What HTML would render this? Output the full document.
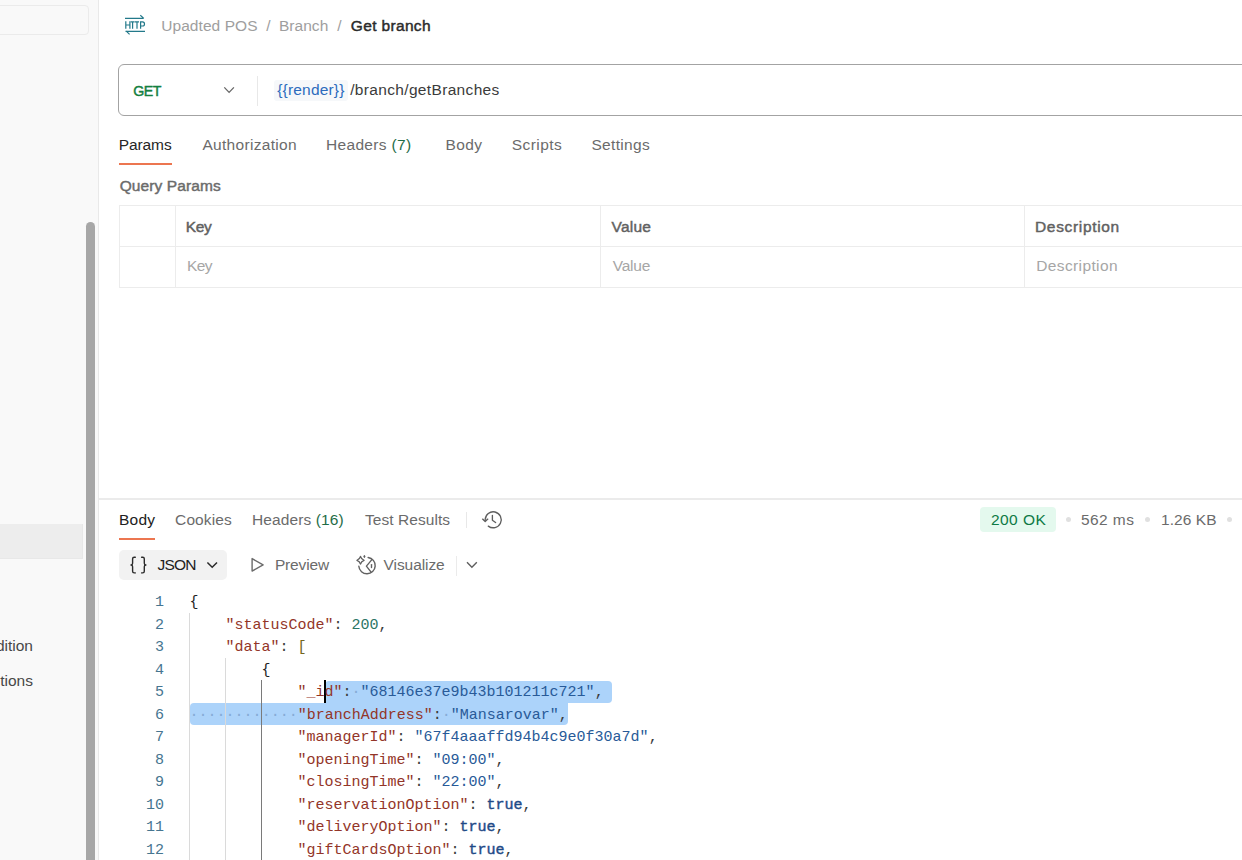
<!DOCTYPE html>
<html><head><meta charset="utf-8">
<style>
*{margin:0;padding:0;box-sizing:border-box}
html,body{width:1242px;height:860px;overflow:hidden;background:#fff;font-family:"Liberation Sans",sans-serif;color:#212121}
.a{position:absolute;white-space:nowrap}
.tx{font-size:15.5px;line-height:20px}
#side{position:absolute;left:0;top:0;width:98px;height:860px;background:#f9f9f9}
#sideb{position:absolute;left:98px;top:0;width:1px;height:860px;background:#e9e9e9}
#search{position:absolute;left:-10px;top:5px;width:99px;height:30px;border:1px solid #ebebeb;border-radius:4px;background:#f9f9f9}
#selrow{position:absolute;left:-4px;top:524px;width:87px;height:34.5px;background:#ededed;border-right:1px solid #e8e8e8;border-bottom:1px solid #e8e8e8}
.sidetxt{font-size:15.5px;line-height:20px;color:#474747;text-align:right;width:200px}
#sbar{position:absolute;left:86px;top:222px;width:9px;height:660px;background:#a7a7a7;border-radius:4.5px}
.ln{position:absolute;left:100px;width:64px;text-align:right;font-family:"Liberation Mono",monospace;font-size:15px;line-height:22px;color:#467590;white-space:pre}
.cl{position:absolute;left:189.5px;font-family:"Liberation Mono",monospace;font-size:15px;line-height:22px;color:#3a3a3a;white-space:pre}
.k{color:#933528}.s{color:#285a98}.n{color:#2b7565}.t{color:#1f4a87;-webkit-text-stroke:0.4px #1f4a87}.bk{color:#74671e}.p{color:#222}
.dot{color:#86acd6}
.g{position:absolute;width:1px;background:#dadada}
</style></head><body>
<div id="side">
  <div id="search"></div>
  <div id="selrow"></div>
  <div class="a sidetxt" style="left:-167px;top:636px">dition</div>
  <div class="a sidetxt" style="left:-167px;top:671px">tions</div>
  <div id="sbar"></div>
</div>
<div id="sideb"></div>

<!-- HTTP icon -->
<svg class="a" style="left:118px;top:10px" width="36" height="30" viewBox="118 10 36 30">
  <g stroke="#23798a" stroke-width="1.2" fill="none" stroke-linecap="butt">
    <path d="M125 18.4H143.6M140.3 15.3L143.8 18.4"/>
    <path d="M125.5 31.3H145M126 30.9L129.6 34.4"/>
    <path d="M125.8 21.2V28.8M129.9 21.2V28.8M125.8 25H129.9"/>
    <path d="M130.6 21.8H134.6M132.6 21.8V28.8"/>
    <path d="M134.9 21.8H139M137 21.8V28.8"/>
    <path d="M140.6 28.8V21.8H142.5Q144.5 21.8 144.5 23.9Q144.5 26 142.5 26H140.6"/>
  </g>
</svg>

<!-- url bar -->
<div class="a" style="left:118px;top:64px;width:1200px;height:52px;border:1px solid #a3a3a3;border-radius:6px"></div>
<svg class="a" style="left:220px;top:82px" width="18" height="16" viewBox="220 82 18 16"><path d="M224.3 87.4L229.1 92.4L233.9 87.4" stroke="#666" stroke-width="1.3" fill="none"/></svg>
<div class="a" style="left:257px;top:76px;width:1px;height:30px;background:#e8e8e8"></div>
<div class="a" style="left:274px;top:79.5px;width:74px;height:21px;background:#f6f8fa;border-radius:3px"></div>

<!-- request tabs underline -->
<div class="a" style="left:119px;top:163px;width:53px;height:2px;background:#ec7650"></div>

<!-- table -->
<div class="a" style="left:119px;top:205px;width:1200px;height:83px;border:1px solid #ececec"></div>
<div class="a" style="left:119px;top:246px;width:1200px;height:1px;background:#ececec"></div>
<div class="a" style="left:175px;top:205px;width:1px;height:83px;background:#ececec"></div>
<div class="a" style="left:600px;top:205px;width:1px;height:83px;background:#ececec"></div>
<div class="a" style="left:1024px;top:205px;width:1px;height:83px;background:#ececec"></div>

<!-- response divider -->
<div class="a" style="left:99px;top:498px;width:1143px;height:1.5px;background:#ebebeb"></div>

<!-- response tabs -->
<div class="a" style="left:119px;top:538px;width:36px;height:2px;background:#ec7650"></div>
<div class="a" style="left:466px;top:512px;width:1px;height:16px;background:#e8e8e8"></div>
<svg class="a" style="left:480px;top:507px" width="26" height="26" viewBox="480 507 26 26">
  <g stroke="#5e5e5e" stroke-width="1.35" fill="none" stroke-linecap="round" stroke-linejoin="round">
    <path d="M488.3 526.1A8 8 0 1 0 485.2 519.6"/>
    <path d="M482.6 519.1L485.2 521.6L487.8 519.1"/>
    <path d="M492.4 515.3V520.3L495.6 522.5"/>
  </g>
</svg>

<!-- status -->
<div class="a" style="left:980px;top:507px;width:76px;height:24.5px;background:#e4f9ee;border-radius:4px"></div>
<div class="a" style="left:1066px;top:517px;width:5px;height:5px;background:#e0e0e0;border-radius:50%"></div>
<div class="a" style="left:1145px;top:517px;width:5px;height:5px;background:#e0e0e0;border-radius:50%"></div>
<div class="a" style="left:1227px;top:517px;width:5px;height:5px;background:#e0e0e0;border-radius:50%"></div>

<!-- json toolbar -->
<div class="a" style="left:119px;top:550px;width:108px;height:30px;background:#f2f2f2;border-radius:5px"></div>
<svg class="a" style="left:126px;top:552px" width="26" height="26" viewBox="126 552 26 26">
  <g stroke="#2a2a2a" stroke-width="1.4" fill="none" stroke-linecap="round" stroke-linejoin="round">
    <path d="M135.3 557.2H134.2Q132.6 557.2 132.6 558.8V563.3Q132.6 565 131 565Q132.6 565 132.6 566.7V571.3Q132.6 572.9 134.2 572.9H135.3"/>
    <path d="M141.6 557.2H142.7Q144.3 557.2 144.3 558.8V563.3Q144.3 565 145.9 565Q144.3 565 144.3 566.7V571.3Q144.3 572.9 142.7 572.9H141.6"/>
  </g>
</svg>
<svg class="a" style="left:204px;top:558px" width="16" height="12" viewBox="204 558 16 12"><path d="M207.4 562.5L212.2 567.3L217 562.5" stroke="#2a2a2a" stroke-width="1.5" fill="none"/></svg>
<svg class="a" style="left:248px;top:555px" width="20" height="20" viewBox="248 555 20 20"><path d="M252.1 558.6V571.1L263.1 564.9Z" stroke="#6b6b6b" stroke-width="1.4" fill="none" stroke-linejoin="round"/></svg>
<svg class="a" style="left:354px;top:551px" width="26" height="28" viewBox="354 551 26 28">
  <g stroke="#616161" stroke-width="1.4" fill="none" stroke-linecap="round" stroke-linejoin="round">
    <path d="M368.14 557.48A8.2 8.2 0 1 1 358.83 566.3"/>
    <path d="M371.9 559.6L366.4 566.1L371.1 572.1"/>
    <path d="M371.5 564.6V567.6"/>
    <path d="M360.5 556.4Q361.3 559.5 364.1 560.3Q361.3 561.1 360.5 564.1Q359.7 561.1 356.9 560.3Q359.7 559.5 360.5 556.4Z" stroke-width="1.3"/>
  </g>
  <path d="M364.4 555.1L365.1 556.5L364.4 557.9L363.7 556.5Z" fill="#616161" stroke="#616161" stroke-width="0.6" stroke-linejoin="round"/>
</svg>
<div class="a" style="left:456px;top:555.5px;width:1px;height:20px;background:#ebebeb"></div>
<svg class="a" style="left:464px;top:558px" width="16" height="12" viewBox="464 558 16 12"><path d="M467 562.3L471.9 567.2L476.8 562.3" stroke="#5e5e5e" stroke-width="1.4" fill="none"/></svg>

<div class='a tx' style='left:161.20px;top:15.80px;font-size:15.5px;font-weight:400;color:#9e9e9e;letter-spacing:0.070px'>Upadted POS</div>
<div class='a tx' style='left:266.20px;top:15.80px;font-size:15.5px;font-weight:400;color:#9e9e9e;letter-spacing:0.000px'>/</div>
<div class='a tx' style='left:278.90px;top:15.80px;font-size:15.5px;font-weight:400;color:#9e9e9e;letter-spacing:0.060px'>Branch</div>
<div class='a tx' style='left:337.20px;top:15.80px;font-size:15.5px;font-weight:400;color:#9e9e9e;letter-spacing:0.000px'>/</div>
<div class='a tx' style='left:350.80px;top:15.80px;font-size:15.5px;font-weight:400;-webkit-text-stroke:0.45px #2b2b2b;color:#2b2b2b;letter-spacing:0.344px'>Get branch</div>
<div class='a tx' style='left:133.20px;top:80.80px;font-size:14.2px;font-weight:400;-webkit-text-stroke:0.45px #14803f;color:#14803f;letter-spacing:-0.500px'>GET</div>
<div class='a tx' style='left:277.20px;top:80.30px;font-size:15.5px;font-weight:400;color:#2c6bbd;letter-spacing:0.189px'>{{render}}</div>
<div class='a tx' style='left:350.20px;top:80.30px;font-size:15.5px;font-weight:400;color:#3b3b3b;letter-spacing:0.339px'>/branch/getBranches</div>
<div class='a tx' style='left:118.70px;top:134.90px;font-size:15.5px;font-weight:400;color:#262626;letter-spacing:-0.080px'>Params</div>
<div class='a tx' style='left:202.40px;top:135.00px;font-size:15.5px;font-weight:400;color:#6b6b6b;letter-spacing:0.317px'>Authorization</div>
<div class='a tx' style='left:326.00px;top:135.00px;font-size:15.5px;font-weight:400;color:#6b6b6b;letter-spacing:0.320px'>Headers <span style='color:#1f6d48'>(7)</span></div>
<div class='a tx' style='left:445.50px;top:135.00px;font-size:15.5px;font-weight:400;color:#6b6b6b;letter-spacing:0.400px'>Body</div>
<div class='a tx' style='left:511.80px;top:135.00px;font-size:15.5px;font-weight:400;color:#6b6b6b;letter-spacing:0.417px'>Scripts</div>
<div class='a tx' style='left:591.40px;top:135.00px;font-size:15.5px;font-weight:400;color:#6b6b6b;letter-spacing:0.343px'>Settings</div>
<div class='a tx' style='left:119.70px;top:176.10px;font-size:15.5px;font-weight:400;-webkit-text-stroke:0.45px #6b6b6b;color:#6b6b6b;letter-spacing:0.109px'>Query Params</div>
<div class='a tx' style='left:185.70px;top:216.60px;font-size:15.5px;font-weight:400;-webkit-text-stroke:0.45px #616161;color:#616161;letter-spacing:-0.350px'>Key</div>
<div class='a tx' style='left:611.50px;top:216.60px;font-size:15.5px;font-weight:400;-webkit-text-stroke:0.45px #616161;color:#616161;letter-spacing:0.250px'>Value</div>
<div class='a tx' style='left:1035.00px;top:216.60px;font-size:15.5px;font-weight:400;-webkit-text-stroke:0.45px #616161;color:#616161;letter-spacing:0.670px'>Description</div>
<div class='a tx' style='left:187.10px;top:255.80px;font-size:15.5px;font-weight:400;color:#a6a6a6;letter-spacing:-0.650px'>Key</div>
<div class='a tx' style='left:612.70px;top:255.70px;font-size:15.5px;font-weight:400;color:#a6a6a6;letter-spacing:-0.200px'>Value</div>
<div class='a tx' style='left:1036.30px;top:255.70px;font-size:15.5px;font-weight:400;color:#a6a6a6;letter-spacing:0.370px'>Description</div>
<div class='a tx' style='left:118.90px;top:510.00px;font-size:15.5px;font-weight:400;color:#212121;letter-spacing:0.300px'>Body</div>
<div class='a tx' style='left:175.10px;top:510.00px;font-size:15.5px;font-weight:400;color:#6b6b6b;letter-spacing:0.100px'>Cookies</div>
<div class='a tx' style='left:251.90px;top:510.00px;font-size:15.5px;font-weight:400;color:#6b6b6b;letter-spacing:0.127px'>Headers <span style='color:#1f6d48'>(16)</span></div>
<div class='a tx' style='left:365.00px;top:510.00px;font-size:15.5px;font-weight:400;color:#6b6b6b;letter-spacing:0.064px'>Test Results</div>
<div class='a tx' style='left:990.90px;top:509.90px;font-size:15.5px;font-weight:400;color:#0e7a45;letter-spacing:0.460px'>200 OK</div>
<div class='a tx' style='left:1081.00px;top:509.90px;font-size:15.5px;font-weight:400;color:#6b6b6b;letter-spacing:0.420px'>562 ms</div>
<div class='a tx' style='left:1161.10px;top:509.90px;font-size:15.5px;font-weight:400;color:#6b6b6b;letter-spacing:0.050px'>1.26 KB</div>
<div class='a tx' style='left:157.50px;top:554.60px;font-size:15.5px;font-weight:400;color:#212121;letter-spacing:-0.767px'>JSON</div>
<div class='a tx' style='left:274.90px;top:554.70px;font-size:15.5px;font-weight:400;color:#6b6b6b;letter-spacing:-0.150px'>Preview</div>
<div class='a tx' style='left:383.60px;top:554.70px;font-size:15.5px;font-weight:400;color:#6b6b6b;letter-spacing:-0.075px'>Visualize</div>

<!-- code area -->

<!-- selection -->
<div class="a" style="left:324.5px;top:680.5px;width:287.5px;height:22.5px;background:#acd3fa;border-radius:4px 4px 4px 0"></div>
<div class="a" style="left:189.5px;top:702.5px;width:378.5px;height:22.3px;background:#acd3fa;border-radius:4px 0 4px 4px"></div>
<div class="a" style="left:324px;top:680px;width:2px;height:23px;background:#000"></div>

<div class="g" style="left:189px;top:613px;height:247px"></div>
<div class="g" style="left:225px;top:658px;height:202px"></div>
<div class="g" style="left:261px;top:680px;height:180px;background:#7a7a7a"></div>
<div id="code">
<div class='ln' style='top:592.00px'>1</div>
<div class='cl' style='top:592.00px'><span class='p'>{</span></div>
<div class='ln' style='top:614.53px'>2</div>
<div class='cl' style='top:614.53px'>    <span class='k'>"statusCode"</span>: <span class='n'>200</span>,</div>
<div class='ln' style='top:637.06px'>3</div>
<div class='cl' style='top:637.06px'>    <span class='k'>"data"</span>: <span class='bk'>[</span></div>
<div class='ln' style='top:659.59px'>4</div>
<div class='cl' style='top:659.59px'>        <span class='p'>{</span></div>
<div class='ln' style='top:682.12px'>5</div>
<div class='cl' style='top:682.12px'>            <span class='k'>"_id"</span>:<span class='dot'>·</span><span class='s'>"68146e37e9b43b101211c721"</span>,</div>
<div class='ln' style='top:704.65px'>6</div>
<div class='cl' style='top:704.65px'><span class='dot'>·</span><span class='dot'>·</span><span class='dot'>·</span><span class='dot'>·</span><span class='dot'>·</span><span class='dot'>·</span><span class='dot'>·</span><span class='dot'>·</span><span class='dot'>·</span><span class='dot'>·</span><span class='dot'>·</span><span class='dot'>·</span><span class='k'>"branchAddress"</span>:<span class='dot'>·</span><span class='s'>"Mansarovar"</span>,</div>
<div class='ln' style='top:727.18px'>7</div>
<div class='cl' style='top:727.18px'>            <span class='k'>"managerId"</span>: <span class='s'>"67f4aaaffd94b4c9e0f30a7d"</span>,</div>
<div class='ln' style='top:749.71px'>8</div>
<div class='cl' style='top:749.71px'>            <span class='k'>"openingTime"</span>: <span class='s'>"09:00"</span>,</div>
<div class='ln' style='top:772.24px'>9</div>
<div class='cl' style='top:772.24px'>            <span class='k'>"closingTime"</span>: <span class='s'>"22:00"</span>,</div>
<div class='ln' style='top:794.77px'>10</div>
<div class='cl' style='top:794.77px'>            <span class='k'>"reservationOption"</span>: <span class='t'>true</span>,</div>
<div class='ln' style='top:817.30px'>11</div>
<div class='cl' style='top:817.30px'>            <span class='k'>"deliveryOption"</span>: <span class='t'>true</span>,</div>
<div class='ln' style='top:839.83px'>12</div>
<div class='cl' style='top:839.83px'>            <span class='k'>"giftCardsOption"</span>: <span class='t'>true</span>,</div>
</div>
</body></html>
